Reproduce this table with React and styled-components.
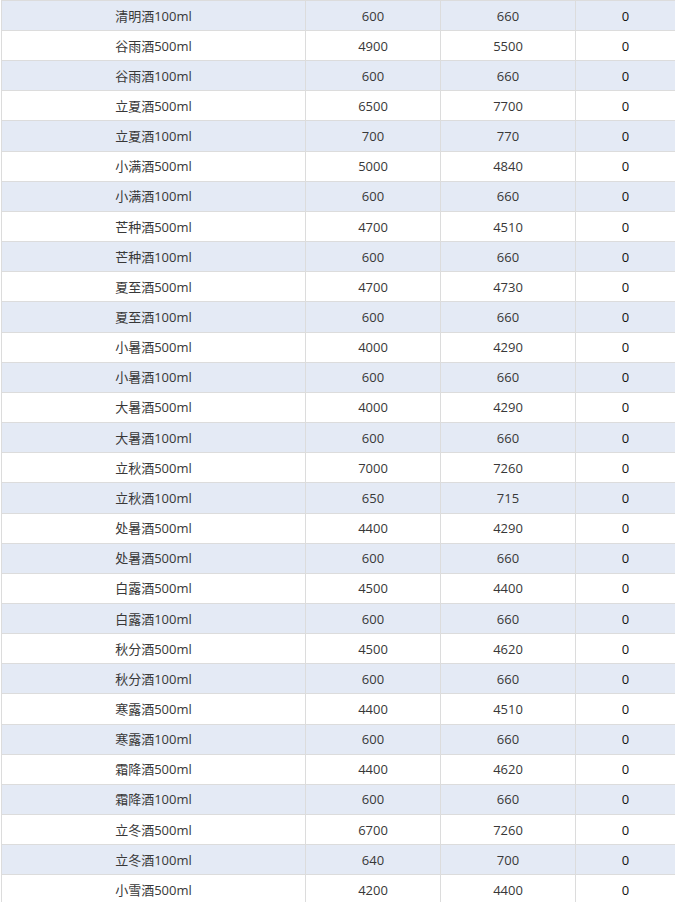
import React from 'react';
import styled, { createGlobalStyle } from 'styled-components';

const GlobalStyle = createGlobalStyle`
  * { box-sizing: border-box; }
  body {
    margin: 0;
    background: #fff;
    overflow: hidden;
    font-family: "Open Sans", "Noto Sans CJK SC", sans-serif;
  }
`;

const Wrap = styled.div`
  padding-left: 1px;
  width: 675px;
  overflow: hidden;
`;

const Table = styled.table`
  border-collapse: separate;
  border-spacing: 0;
  table-layout: fixed;
  width: 675px;
  font-size: 13px;
  color: #383838;
`;

const Row = styled.tr`
  height: 30.17px;
  background: ${(p) => (p.$striped ? '#e4eaf5' : '#fff')};

  &:first-child {
    height: 31px;
  }
  &:first-child td {
    border-top: 1px solid #dcdcdc;
  }
`;

const Cell = styled.td`
  width: ${(p) => p.$w}px;
  padding: 0 4px;
  text-align: center;
  vertical-align: middle;
  line-height: 18px;
  border-right: 1px solid #dcdcdc;
  border-bottom: 1px solid #dcdcdc;
  color: ${(p) => (p.$dark ? '#111' : 'inherit')};

  &:first-child {
    border-left: 1px solid #dcdcdc;
  }
`;

// 产品 / 成本 / 售价 / 库存
const rows = [
  ['清明酒100ml', 600, 660],
  ['谷雨酒500ml', 4900, 5500],
  ['谷雨酒100ml', 600, 660],
  ['立夏酒500ml', 6500, 7700],
  ['立夏酒100ml', 700, 770],
  ['小满酒500ml', 5000, 4840],
  ['小满酒100ml', 600, 660],
  ['芒种酒500ml', 4700, 4510],
  ['芒种酒100ml', 600, 660],
  ['夏至酒500ml', 4700, 4730],
  ['夏至酒100ml', 600, 660],
  ['小暑酒500ml', 4000, 4290],
  ['小暑酒100ml', 600, 660],
  ['大暑酒500ml', 4000, 4290],
  ['大暑酒100ml', 600, 660],
  ['立秋酒500ml', 7000, 7260],
  ['立秋酒100ml', 650, 715],
  ['处暑酒500ml', 4400, 4290],
  ['处暑酒500ml', 600, 660],
  ['白露酒500ml', 4500, 4400],
  ['白露酒100ml', 600, 660],
  ['秋分酒500ml', 4500, 4620],
  ['秋分酒100ml', 600, 660],
  ['寒露酒500ml', 4400, 4510],
  ['寒露酒100ml', 600, 660],
  ['霜降酒500ml', 4400, 4620],
  ['霜降酒100ml', 600, 660],
  ['立冬酒500ml', 6700, 7260],
  ['立冬酒100ml', 640, 700],
  ['小雪酒500ml', 4200, 4400],
];

export default function App() {
  return (
    <Wrap>
      <GlobalStyle />
      <Table>
        <tbody>
          {rows.map(([name, cost, price], i) => (
            <Row key={i} $striped={i % 2 === 0}>
              <Cell $w={305}>{name}</Cell>
              <Cell $w={135}>{cost}</Cell>
              <Cell $w={135}>{price}</Cell>
              <Cell $w={100} $dark>0</Cell>
            </Row>
          ))}
        </tbody>
      </Table>
    </Wrap>
  );
}
